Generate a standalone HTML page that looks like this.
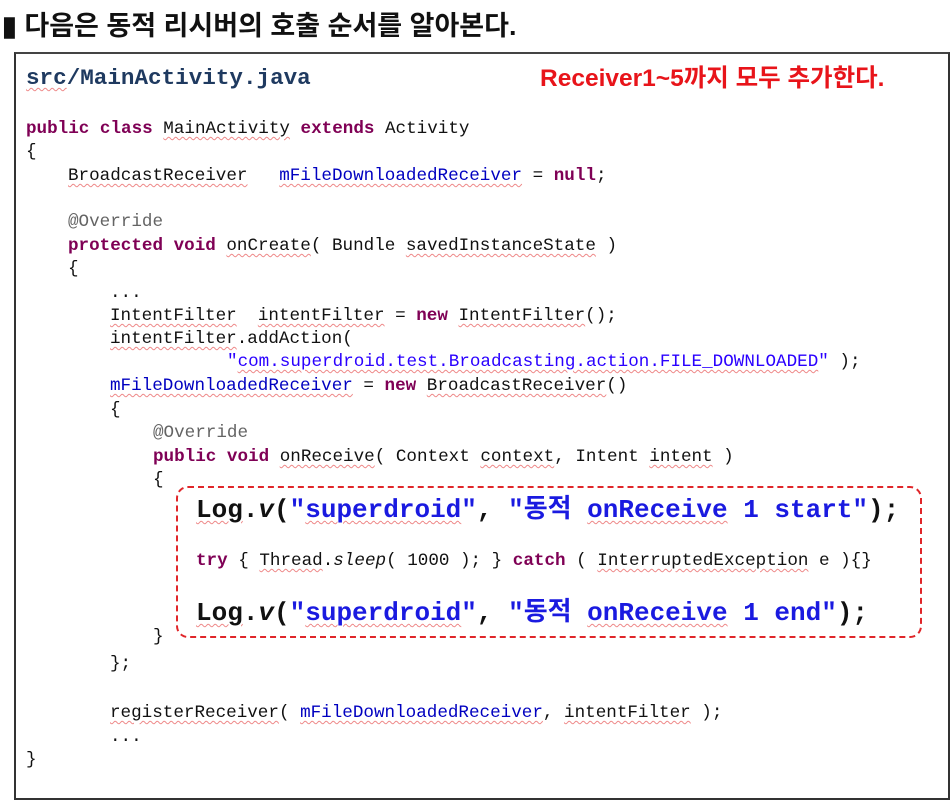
<!DOCTYPE html>
<html><head><meta charset="utf-8"><style>
body{margin:0;width:951px;height:802px;background:#fff;position:relative;overflow:hidden;font-family:"Liberation Sans","Noto Sans CJK KR",sans-serif}
.h{position:absolute;left:2px;top:4px;font-size:27px;font-weight:bold;color:#111;white-space:nowrap}
.box{position:absolute;left:14px;top:52px;width:932px;height:744px;border:2px solid #333;border-top-color:#444}
.l{position:absolute;white-space:pre;font-family:"Liberation Mono","Noto Sans CJK KR",monospace;font-size:17.6px;line-height:22px;height:22px;color:#111}
.k{color:#7f0055;font-weight:bold}
.s{color:#2a00ff}
.f{color:#0000c0}
.a{color:#646464}
.u{text-decoration:underline wavy #e88 1px;text-underline-offset:3px}
.big{font-size:26px;line-height:30px;height:30px;font-weight:bold}
.big .s{color:#1a1ae0}
.dash{position:absolute;left:176px;top:486px;width:742px;height:148px;border:2px dashed #e0262a;border-radius:12px}
.red{position:absolute;left:540px;top:59px;color:#e8141a;font-weight:bold;font-size:24.5px;white-space:nowrap}
.t{position:absolute;left:26px;top:65px;font-family:"Liberation Mono",monospace;font-weight:bold;font-size:22.6px;color:#1f3a60;white-space:pre}
</style></head><body>
<div class="h">▮ 다음은 동적 리시버의 호출 순서를 알아본다.</div>
<div class="box"></div>
<div class="t"><span class="u">src</span>/MainActivity.java</div>
<div class="red">Receiver1~5까지 모두 추가한다.</div>
<div class="l" style="left:26px;top:118px"><span class="k">public class</span> <span class="u">MainActivity</span> <span class="k">extends</span> Activity</div>
<div class="l" style="left:26px;top:141px">{</div>
<div class="l" style="left:68px;top:165px"><span class="u">BroadcastReceiver</span>   <span class="f u">mFileDownloadedReceiver</span> = <span class="k">null</span>;</div>
<div class="l" style="left:68px;top:211px"><span class="a">@Override</span></div>
<div class="l" style="left:68px;top:235px"><span class="k">protected void</span> <span class="u">onCreate</span>( Bundle <span class="u">savedInstanceState</span> )</div>
<div class="l" style="left:68px;top:258px">{</div>
<div class="l" style="left:110px;top:282px">...</div>
<div class="l" style="left:110px;top:305px"><span class="u">IntentFilter</span>  <span class="u">intentFilter</span> = <span class="k">new</span> <span class="u">IntentFilter</span>();</div>
<div class="l" style="left:110px;top:328px"><span class="u">intentFilter</span>.addAction(</div>
<div class="l" style="left:227px;top:351px"><span class="s">"<span class="u">com.superdroid.test.Broadcasting.action.FILE_DOWNLOADED</span>"</span> );</div>
<div class="l" style="left:110px;top:375px"><span class="f u">mFileDownloadedReceiver</span> = <span class="k">new</span> <span class="u">BroadcastReceiver</span>()</div>
<div class="l" style="left:110px;top:399px">{</div>
<div class="l" style="left:153px;top:422px"><span class="a">@Override</span></div>
<div class="l" style="left:153px;top:446px"><span class="k">public void</span> <span class="u">onReceive</span>( Context <span class="u">context</span>, Intent <span class="u">intent</span> )</div>
<div class="l" style="left:153px;top:469px">{</div>
<div class="dash"></div>
<div class="l big" style="left:196px;top:495px"><span class="u">Log</span>.<i>v</i>(<span class="s">"<span class="u">superdroid</span>"</span>, <span class="s">"동적 <span class="u">onReceive</span> 1 start"</span>);</div>
<div class="l" style="left:196px;top:550px"><span class="k">try</span> { <span class="u">Thread</span>.<i>sleep</i>( 1000 ); } <span class="k">catch</span> ( <span class="u">InterruptedException</span> e ){}</div>
<div class="l big" style="left:196px;top:598px"><span class="u">Log</span>.<i>v</i>(<span class="s">"<span class="u">superdroid</span>"</span>, <span class="s">"동적 <span class="u">onReceive</span> 1 end"</span>);</div>
<div class="l" style="left:153px;top:626px">}</div>
<div class="l" style="left:110px;top:653px">};</div>
<div class="l" style="left:110px;top:702px"><span class="u">registerReceiver</span>( <span class="f u">mFileDownloadedReceiver</span>, <span class="u">intentFilter</span> );</div>
<div class="l" style="left:110px;top:726px">...</div>
<div class="l" style="left:26px;top:749px">}</div>
</body></html>
